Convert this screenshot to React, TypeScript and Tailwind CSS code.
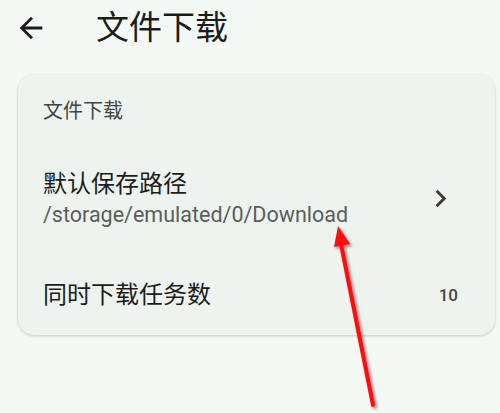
const font = { fontFamily: 'Roboto, "Noto Sans CJK SC", sans-serif' };

function BackIcon() {
  return (
    <svg width="34" height="34" viewBox="0 0 24 24" fill="#1b1c1b">
      <path d="M20 11H7.83l5.59-5.59L12 4l-8 8 8 8 1.41-1.41L7.83 13H20v-2z" />
    </svg>
  );
}

function ChevronIcon() {
  return (
    <svg width="35" height="35" viewBox="0 0 24 24" fill="#3a3d3b">
      <path d="M10 6L8.59 7.41 13.17 12l-4.58 4.59L10 18l6-6z" />
    </svg>
  );
}

function RedArrow() {
  return (
    <svg className="absolute left-0 top-0 pointer-events-none" width="500" height="413" viewBox="0 0 500 413">
      <defs>
        <filter id="sh" x="-50%" y="-50%" width="200%" height="200%">
          <feDropShadow dx="2" dy="2" stdDeviation="1.5" floodColor="#000" floodOpacity="0.45" />
        </filter>
      </defs>
      <g filter="url(#sh)">
        <line x1="373" y1="405" x2="341" y2="244" stroke="#ff0a0a" strokeWidth="4" strokeLinecap="round" />
        <polygon points="338,226 350,244 334,247" fill="#ff0a0a" />
      </g>
    </svg>
  );
}

export default function App() {
  return (
    <div className="relative w-[500px] h-[413px] overflow-hidden bg-[#f5f9f6]" style={font}>
      <header className="h-[56px] flex items-center">
        <div className="ml-[14px] w-[34px] h-[34px] flex items-center justify-center">
          <BackIcon />
        </div>
        <h1 className="ml-[48px] text-[33px] leading-[40px] text-[#1b1c1b]">文件下载</h1>
      </header>

      <div className="mt-[18px] ml-[18px] w-[477px] rounded-[16px] bg-[#eef3ef] shadow-[0_1px_3px_rgba(0,0,0,0.2)] pt-[25px] pb-[25px] pl-[25px] pr-[37px]">
        <div className="text-[20px] leading-[24px] text-[#414642]">文件下载</div>

        <div className="mt-[46px] flex items-center justify-between">
          <div>
            <div className="text-[24px] leading-[30px] text-[#1c1d1c]">默认保存路径</div>
            <div className="mt-[3px] text-[21.5px] leading-[26px] text-[#5a5e5b]">/storage/emulated/0/Download</div>
          </div>
          <ChevronIcon />
        </div>

        <div className="mt-[52px] flex items-center justify-between h-[30px]">
          <div className="text-[24px] leading-[30px] text-[#1c1d1c]">同时下载任务数</div>
          <div className="text-[17px] leading-[24px] font-medium text-[#444845]">10</div>
        </div>
      </div>

      <RedArrow />
    </div>
  );
}
